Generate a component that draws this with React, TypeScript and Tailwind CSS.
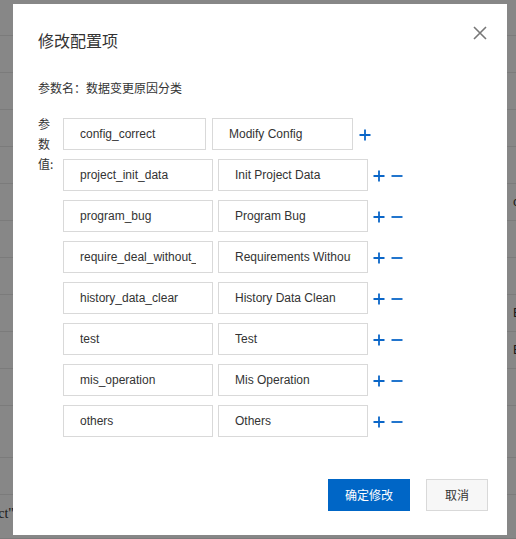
import React from 'react';

interface ConfigRow {
  key: string;
  label: string;
}

const rows: ConfigRow[] = [
  { key: 'config_correct', label: 'Modify Config' },
  { key: 'project_init_data', label: 'Init Project Data' },
  { key: 'program_bug', label: 'Program Bug' },
  { key: 'require_deal_without_requirement', label: 'Requirements Without Deal' },
  { key: 'history_data_clear', label: 'History Data Clean' },
  { key: 'test', label: 'Test' },
  { key: 'mis_operation', label: 'Mis Operation' },
  { key: 'others', label: 'Others' },
];

const PlusIcon = () => (
  <svg width="12" height="12" viewBox="0 0 12 12" className="shrink-0 mt-[2px]">
    <path d="M6 0.5V11.5M0.5 6H11.5" stroke="#0a66c8" strokeWidth="1.8" fill="none" />
  </svg>
);

const MinusIcon = () => (
  <svg width="12" height="12" viewBox="0 0 12 12" className="shrink-0 mt-[2px]">
    <path d="M0.5 6H11.5" stroke="#0a66c8" strokeWidth="1.8" fill="none" />
  </svg>
);

const CloseIcon = () => (
  <svg width="14" height="14" viewBox="0 0 14 14">
    <path d="M1 1L13 13M13 1L1 13" stroke="#777" strokeWidth="1.6" fill="none" />
  </svg>
);

const inputCls =
  'h-[32px] border border-[#d9d9d9] bg-white px-[16px] text-[12px] text-[#333] outline-none font-["Liberation_Sans",Arial,sans-serif]';

// background table rows behind the overlay
const bgRows: { h: string; right?: string; left?: string }[] = [
  { h: 'h-[37px]' },
  { h: 'h-[37px]' },
  { h: 'h-[37px]' },
  { h: 'h-[37px]' },
  { h: 'h-[37px]', right: 'config' },
  { h: 'h-[37px]' },
  { h: 'h-[37px]' },
  { h: 'h-[37px]', right: 'Edit' },
  { h: 'h-[37px]', right: 'Edit' },
  { h: 'h-[37px]' },
  { h: 'h-[52px]' },
  { h: 'h-[37px]' },
  { h: 'h-[44px]', left: 'object"' },
];

const App: React.FC = () => {
  return (
    <div className="relative h-[539px] w-full overflow-hidden bg-white font-['Liberation_Sans',Arial,'Noto_Sans_CJK_SC',sans-serif]">
      {/* page underneath */}
      <div className="flex flex-col">
        <div className="h-[36px] border-b border-[#e8e8e8]" />
        {bgRows.map((r, i) => (
          <div key={i} className={`${r.h} flex items-center border-b border-[#e8e8e8] text-[13px] text-[#333]`}>
            {r.left && (
              <div className="flex w-[14px] justify-end overflow-hidden whitespace-nowrap font-['Liberation_Serif',serif] text-[14px] mt-[-6px]">
                {r.left}
              </div>
            )}
            {r.right && <span className="pl-[513px] whitespace-nowrap">{r.right}</span>}
          </div>
        ))}
      </div>

      {/* modal overlay */}
      <div className="fixed inset-0 bg-black/[0.47] pl-[13px] pt-[4px]">
        <div className="relative flex h-[531px] w-[494px] flex-col bg-white pt-[24px] pl-[25px] pr-[19px] pb-[24px] font-['Liberation_Sans',Arial,'Noto_Sans_CJK_SC',sans-serif]">
          <button className="absolute right-[20px] top-[22px] cursor-pointer">
            <CloseIcon />
          </button>

          <h2 className="text-[16px] leading-[24px] text-[#333] font-['Noto_Sans_CJK_SC',sans-serif]">修改配置项</h2>

          <div className="mt-[26px] text-[12px] leading-[20px] text-[#333] font-['Noto_Sans_CJK_SC',sans-serif]">
            参数名：数据变更原因分类
          </div>

          <div className="mt-[16px] flex">
            <div className="flex w-[25px] flex-col text-[12px] leading-[20px] text-[#333] font-['Noto_Sans_CJK_SC',sans-serif]">
              <span>参</span>
              <span>数</span>
              <span>值:</span>
            </div>
            <div className="mt-[4px] flex flex-col gap-[9px]">
              {rows.map((row, i) =>
                i === 0 ? (
                  <div key={row.key} className="flex items-center">
                    <input readOnly value={row.key} className={`${inputCls} w-[143px]`} />
                    <input readOnly value={row.label} className={`${inputCls} ml-[6px] w-[141px]`} />
                    <span className="ml-[6px] flex">
                      <PlusIcon />
                    </span>
                  </div>
                ) : (
                  <div key={row.key} className="flex items-center">
                    <input readOnly value={row.key} className={`${inputCls} w-[150px]`} />
                    <input readOnly value={row.label} className={`${inputCls} ml-[5px] w-[150px]`} />
                    <span className="ml-[5px] flex">
                      <PlusIcon />
                    </span>
                    <span className="ml-[6px] flex">
                      <MinusIcon />
                    </span>
                  </div>
                )
              )}
            </div>
          </div>

          <div className="mt-auto flex justify-end gap-[16px]">
            <button className="h-[32px] w-[82px] bg-[#0066c6] text-[12px] text-white font-['Noto_Sans_CJK_SC',sans-serif]">
              确定修改
            </button>
            <button className="h-[32px] w-[62px] border border-[#d9d9d9] bg-[#f7f7f7] text-[12px] text-[#333] font-['Noto_Sans_CJK_SC',sans-serif]">
              取消
            </button>
          </div>
        </div>
      </div>
    </div>
  );
};

export default App;
